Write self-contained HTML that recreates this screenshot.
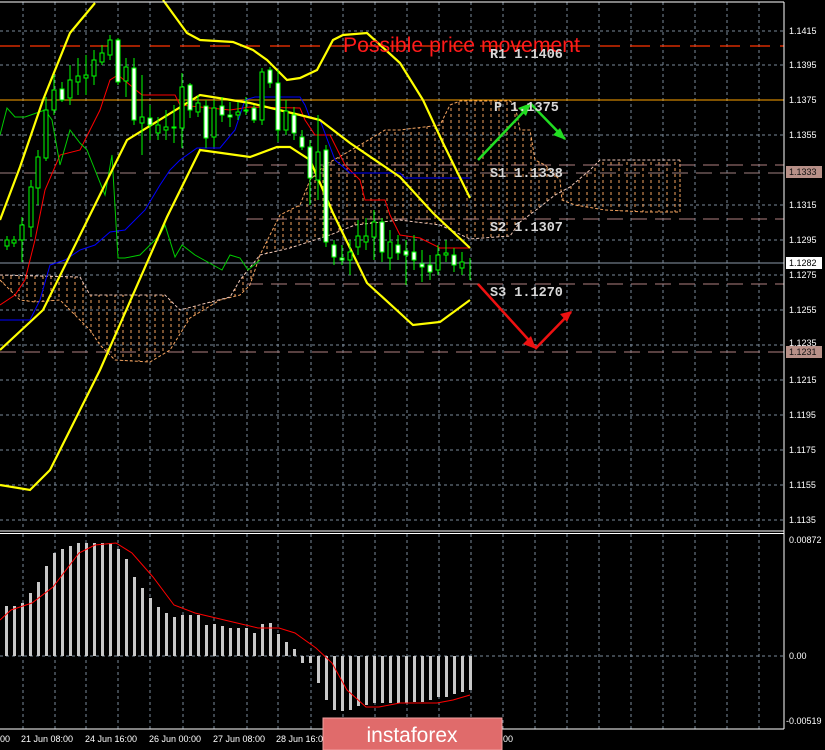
<!DOCTYPE html>
<html><head><meta charset="utf-8"><style>
html,body{margin:0;padding:0;background:#000;width:825px;height:750px;overflow:hidden}
svg{display:block}
.g{stroke:#7a8a9a;stroke-width:1;stroke-dasharray:3,3;fill:none}
.pl{font-family:"Liberation Sans",sans-serif;font-size:9px;fill:#fff}
.lv{font-family:"Liberation Mono",monospace;font-size:13.5px;font-weight:bold;fill:#d8d8d8}
</style></head><body>
<svg width="825" height="750" viewBox="0 0 825 750" xmlns="http://www.w3.org/2000/svg">
<defs>
<pattern id="h" width="8" height="6" patternUnits="userSpaceOnUse"><line x1="3" y1="0" x2="3" y2="3" stroke="#f4a460" stroke-width="1"/></pattern>
</defs>
<rect width="825" height="750" fill="#000"/>
<g class="g">
<path d="M23 2V530M55 2V530M86 2V530M118 2V530M150 2V530M183 2V530M214 2V530M247 2V530M278 2V530M311 2V530M343 2V530M375 2V530M407 2V530M439 2V530M471 2V530M503 2V530M535 2V530M567 2V530M599 2V530M631 2V530M663 2V530M695 2V530M727 2V530M759 2V530"/>
<path d="M0 31H784M0 65H784M0 100H784M0 135H784M0 205H784M0 240H784M0 275H784M0 310H784M0 345H784M0 380H784M0 415H784M0 450H784M0 485H784M0 520H784"/>
<path d="M23 534V729M55 534V729M86 534V729M118 534V729M150 534V729M183 534V729M214 534V729M247 534V729M278 534V729M311 534V729M343 534V729M375 534V729M407 534V729M439 534V729M471 534V729M503 534V729M535 534V729M567 534V729M599 534V729M631 534V729M663 534V729M695 534V729M727 534V729M759 534V729M0 656H784"/>
</g>
<polygon fill="url(#h)" points="0,275 80,277 90,295 165,295 180,310 230,297 240,280 260,255 290,248 330,235 355,225 400,220 440,225 470,239 510,236 520,222 540,207 555,195 570,187 590,170 600,160 680,160 680,212 645,212 605,210 575,205 562,200 560,180 545,165 535,160 530,130 520,130 515,105 510,101 460,101 450,105 440,125 400,130 385,130 360,145 325,165 310,180 300,205 280,215 260,255 250,285 240,295 220,300 190,318 170,350 150,362 115,360 100,345 70,310 60,300 35,302 20,300 0,280"/>
<polyline fill="none" stroke="#f4a460" stroke-dasharray="3,2" points="0,280 20,300 35,302 60,300 70,310 90,330 100,345 115,360 150,362 170,350 190,318 220,300 240,295 250,285 260,255 280,215 300,205 310,180 325,165 360,145 385,130 400,130 440,125 450,105 460,101 510,101 515,105 520,130 530,130 535,160 545,165 560,180 562,200 575,205 605,210 645,212 680,212 680,160"/>
<polyline fill="none" stroke="#f0c8b8" stroke-dasharray="3,2" points="0,275 80,277 90,295 165,295 180,310 230,297 240,280 260,255 290,248 330,235 355,225 400,220 440,225 470,239 510,236 520,222 540,207 555,195 570,187 590,170 600,160 680,160"/>
<line x1="0" y1="46" x2="784" y2="46" stroke="#ff3300" stroke-width="1.3" stroke-dasharray="20,10"/>
<line x1="0" y1="100" x2="784" y2="100" stroke="#ffa500"/>
<line x1="247" y1="165" x2="784" y2="165" stroke="#b08080" stroke-dasharray="16,8"/>
<line x1="0" y1="173" x2="784" y2="173" stroke="#a08080" stroke-dasharray="16,8"/>
<line x1="247" y1="219" x2="784" y2="219" stroke="#b08080" stroke-dasharray="16,8"/>
<line x1="0" y1="263" x2="784" y2="263" stroke="#8a98a8"/>
<line x1="247" y1="284" x2="784" y2="284" stroke="#b08080" stroke-dasharray="16,8"/>
<line x1="0" y1="352" x2="784" y2="352" stroke="#b08080" stroke-dasharray="16,8"/>
<polyline fill="none" stroke="#ff0000" points="0,305 15,295 25,280 35,240 45,190 60,155 80,150 90,130 100,110 110,80 118,75 130,85 142,95 175,95 180,105 200,107 230,110 250,107 300,108 305,120 315,135 330,135 345,165 360,180 365,200 385,200 390,215 400,235 420,238 440,248 470,248"/>
<polyline fill="none" stroke="#0000ff" points="0,320 30,320 40,300 50,265 65,260 80,250 95,245 110,232 125,230 145,210 160,185 170,170 180,160 197,148 220,148 235,130 245,100 255,97 300,97 305,105 310,118 320,120 335,160 350,173 400,173 405,178 470,178"/>
<polyline fill="none" stroke="#00cc00" points="0,135 7,108 15,117 25,117 45,110 52,120 60,165 70,130 80,143 87,150 95,170 105,195 112,155 118,258 125,258 140,255 160,235 165,225 175,257 182,245 195,255 222,270 230,255 240,258 248,270 260,260"/>
<g fill="none" stroke="#ffff00" stroke-width="2.2">
<polyline points="0,220 20,167 43,100 70,33 95,3"/>
<polyline points="163,0 187,33 200,40 233,42 253,50 267,60 287,80 300,78 317,70 333,40 343,35 367,33 400,63 423,100 443,143 470,198"/>
<polyline points="0,350 43,310 127,140 200,95 250,103 300,115 320,120 350,143 400,177 433,213 470,248"/>
<polyline points="0,485 30,490 50,470 70,430 90,390 100,370 167,217 200,150 250,157 277,147 290,147 310,160 333,213 367,283 413,325 440,322 470,300"/>
</g>
<g stroke="#00ff00" stroke-width="1">
<path d="M7 236V250M14 236V247M22 217V262M31 180V237M38 150V205M46 97V161M54 75V115M62 82V102M70 65V105M78 58V95M86 55V95M94 50V85M102 45V65M110 35V60M118 38V85M126 58V97M134 58V125M142 75V155M150 105V140M158 117V140M166 110V140M174 105V143M182 73V148M190 83V118M198 95V117M206 100V148M214 100V147M222 97V122M230 102V127M238 102V120M246 97V115M254 105V123M262 68V125M270 67V88M278 70V142M286 100V135M294 107V140M302 130V150M310 140V205M318 115V200M326 145V247M334 240V265M342 245V265M350 240V275M358 220V255M366 218V250M374 210V260M382 218V262M390 230V270M398 235V260M406 240V285M414 235V270M422 250V282M430 255V280M438 245V275M446 240V262M454 248V272M462 252V275M470 258V280"/>
<g fill="#000">
<rect x="5" y="240" width="4" height="6"/><rect x="12" y="240" width="4" height="3"/><rect x="20" y="225" width="4" height="15"/><rect x="29" y="187" width="4" height="40"/><rect x="36" y="157" width="4" height="31"/><rect x="44" y="110" width="4" height="48"/><rect x="52" y="90" width="4" height="20"/><rect x="68" y="80" width="4" height="18"/><rect x="76" y="76" width="4" height="6"/><rect x="84" y="75" width="4" height="3"/><rect x="92" y="60" width="4" height="16"/><rect x="100" y="53" width="4" height="9"/><rect x="108" y="40" width="4" height="15"/><rect x="124" y="67" width="4" height="14"/><rect x="140" y="117" width="4" height="6"/><rect x="156" y="125" width="4" height="8"/><rect x="164" y="127" width="4" height="3"/><rect x="172" y="127" width="4" height="1"/><rect x="180" y="87" width="4" height="41"/><rect x="196" y="103" width="4" height="9"/><rect x="212" y="108" width="4" height="29"/><rect x="236" y="112" width="4" height="3"/><rect x="244" y="110" width="4" height="1"/><rect x="260" y="72" width="4" height="48"/><rect x="284" y="111" width="4" height="19"/><rect x="316" y="152" width="4" height="28"/><rect x="348" y="252" width="4" height="8"/><rect x="356" y="236" width="4" height="11"/><rect x="364" y="236" width="4" height="6"/><rect x="372" y="222" width="4" height="15"/><rect x="388" y="242" width="4" height="16"/><rect x="436" y="255" width="4" height="15"/><rect x="444" y="253" width="4" height="2"/><rect x="460" y="262" width="4" height="6"/>
</g>
<g fill="#fff">
<rect x="60" y="89" width="4" height="11"/><rect x="116" y="40" width="4" height="42"/><rect x="132" y="68" width="4" height="52"/><rect x="148" y="118" width="4" height="7"/><rect x="188" y="85" width="4" height="25"/><rect x="204" y="106" width="4" height="32"/><rect x="220" y="106" width="4" height="9"/><rect x="228" y="115" width="4" height="2"/><rect x="252" y="108" width="4" height="12"/><rect x="268" y="70" width="4" height="13"/><rect x="276" y="83" width="4" height="47"/><rect x="292" y="115" width="4" height="18"/><rect x="300" y="137" width="4" height="10"/><rect x="308" y="147" width="4" height="31"/><rect x="324" y="150" width="4" height="92"/><rect x="332" y="245" width="4" height="12"/><rect x="340" y="258" width="4" height="2"/><rect x="380" y="222" width="4" height="30"/><rect x="396" y="245" width="4" height="8"/><rect x="404" y="251" width="4" height="4"/><rect x="412" y="252" width="4" height="8"/><rect x="420" y="264" width="4" height="3"/><rect x="428" y="265" width="4" height="7"/><rect x="452" y="255" width="4" height="10"/>
</g>
</g>
<g stroke-width="2.5" fill="none">
<path d="M478 160L531 104L565 139" stroke="#22dd22"/>
<path d="M478 284L536 348L571 312" stroke="#ee1111"/>
</g>
<polygon points="531,103 518,108 526,116" fill="#22dd22"/>
<polygon points="566,140 553,135 560,128" fill="#22dd22"/>
<polygon points="536,349 523,344 531,336" fill="#ee1111"/>
<polygon points="572,311 560,314 567,322" fill="#ee1111"/>
<text x="343" y="52" font-family="Liberation Sans,sans-serif" font-size="21" fill="#ff1a1a" textLength="237" lengthAdjust="spacingAndGlyphs">Possible price movement</text>
<text class="lv" x="490" y="58">R1 1.1406</text>
<text class="lv" x="494" y="111">P 1.1375</text>
<text class="lv" x="490" y="177">S1 1.1338</text>
<text class="lv" x="490" y="231">S2 1.1307</text>
<text class="lv" x="490" y="296">S3 1.1270</text>
<path fill="#c8c8c8" d="M5 606h3v50h-3zM13 606h3v50h-3zM21 603h3v53h-3zM29 593h3v63h-3zM37 582h3v74h-3zM45 566h3v90h-3zM53 553h3v103h-3zM61 549h3v107h-3zM69 546h3v110h-3zM77 543h3v113h-3zM85 543h3v113h-3zM93 543h3v113h-3zM101 543h3v113h-3zM109 543h3v113h-3zM117 549h3v107h-3zM125 559h3v97h-3zM133 577h3v79h-3zM141 588h3v68h-3zM149 598h3v58h-3zM157 607h3v49h-3zM165 613h3v43h-3zM173 617h3v39h-3zM181 615h3v41h-3zM189 615h3v41h-3zM197 615h3v41h-3zM205 625h3v31h-3zM213 624h3v32h-3zM221 626h3v30h-3zM229 628h3v28h-3zM237 628h3v28h-3zM245 628h3v28h-3zM253 633h3v23h-3zM261 624h3v32h-3zM269 623h3v33h-3zM277 634h3v22h-3zM285 642h3v14h-3zM293 649h3v7h-3zM301 656h3v7h-3zM309 656h3v7h-3zM317 656h3v27h-3zM325 656h3v44h-3zM333 656h3v54h-3zM341 656h3v55h-3zM349 656h3v54h-3zM357 656h3v50h-3zM365 656h3v49h-3zM373 656h3v47h-3zM381 656h3v47h-3zM389 656h3v47h-3zM397 656h3v47h-3zM405 656h3v47h-3zM413 656h3v46h-3zM421 656h3v46h-3zM429 656h3v44h-3zM437 656h3v41h-3zM445 656h3v41h-3zM453 656h3v38h-3zM461 656h3v36h-3zM469 656h3v34h-3z"/>
<polyline fill="none" stroke="#ff0000" points="0,620 11,610 32,603 53,587 79,553 95,545 116,543 132,553 153,577 174,605 195,613 216,618 237,623 258,628 279,628 295,633 316,648 332,663 347,690 366,707 379,707 400,703 437,703 453,700 470,695"/>
<line x1="0" y1="2" x2="784" y2="2" stroke="#fff"/>
<line x1="784" y1="2" x2="784" y2="729" stroke="#fff"/>
<line x1="0" y1="531" x2="784" y2="531" stroke="#fff"/>
<line x1="0" y1="533.5" x2="784" y2="533.5" stroke="#fff"/>
<line x1="0" y1="729" x2="784" y2="729" stroke="#fff"/>
<g class="pl">
<text x="789" y="34">1.1415</text><text x="789" y="68">1.1395</text><text x="789" y="103">1.1375</text><text x="789" y="138">1.1355</text><text x="789" y="208">1.1315</text><text x="789" y="243">1.1295</text><text x="789" y="278">1.1275</text><text x="789" y="313">1.1255</text><text x="789" y="346">1.1235</text><text x="789" y="383">1.1215</text><text x="789" y="418">1.1195</text><text x="789" y="453">1.1175</text><text x="789" y="488">1.1155</text><text x="789" y="523">1.1135</text>
<text x="789" y="543">0.00872</text><text x="789" y="659">0.00</text><text x="786" y="724">-0.00519</text>
</g>
<rect x="786" y="166" width="36" height="12" fill="#b89088"/><text class="pl" x="789" y="175" style="fill:#111">1.1333</text>
<rect x="786" y="257" width="36" height="12" fill="#fff"/><text class="pl" x="789" y="266" style="fill:#000">1.1282</text>
<rect x="786" y="346" width="36" height="12" fill="#b89088"/><text class="pl" x="789" y="355" style="fill:#111">1.1231</text>
<g class="pl">
<text x="0" y="742">00</text><text x="21" y="742">21 Jun 08:00</text><text x="85" y="742">24 Jun 16:00</text><text x="149" y="742">26 Jun 00:00</text><text x="213" y="742">27 Jun 08:00</text><text x="276" y="742">28 Jun 16:00</text><text x="503" y="742">00</text>
</g>
<rect x="323" y="718" width="179" height="32" fill="#e06b6b" stroke="#f0a0a0"/>
<text x="412" y="742" text-anchor="middle" font-family="Liberation Sans,sans-serif" font-size="21" fill="#fff">instaforex</text>
</svg>
</body></html>
